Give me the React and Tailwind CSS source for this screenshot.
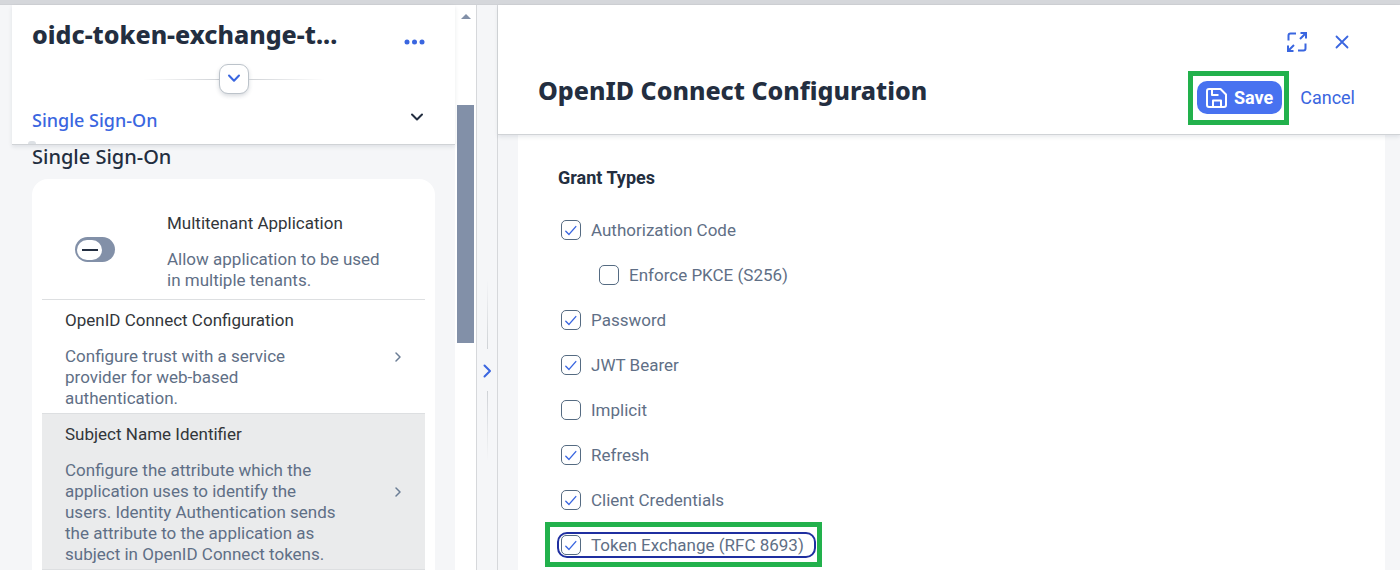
import React from "react";

const GRANTS = [
  { id: "auth-code", label: "Authorization Code", checked: true },
  { id: "pkce", label: "Enforce PKCE (S256)", checked: false, nested: true },
  { id: "password", label: "Password", checked: true },
  { id: "jwt", label: "JWT Bearer", checked: true },
  { id: "implicit", label: "Implicit", checked: false },
  { id: "refresh", label: "Refresh", checked: true },
  { id: "client", label: "Client Credentials", checked: true },
  { id: "exchange", label: "Token Exchange (RFC 8693)", checked: true, focused: true },
];

function CheckOption({ id, label, checked, nested, focused }) {
  return (
    <li className={nested ? "flex h-[45px] items-center pl-[38px]" : "flex h-[45px] items-center"}>
      <div
        className={
          focused
            ? "relative flex items-center rounded-lg outline-2 outline-[#1f2fa0]"
            : "relative flex items-center"
        }
      >
        <span className="ml-[2px] grid size-5 shrink-0 place-items-center">
          <input
            id={id}
            type="checkbox"
            defaultChecked={checked}
            className="peer col-start-1 row-start-1 size-5 appearance-none rounded-[5px] border border-[#556b82] bg-white"
          />
          <svg
            viewBox="0 0 20 20"
            className="pointer-events-none invisible col-start-1 row-start-1 size-5 peer-checked:visible"
            fill="none"
            stroke="#3a66e0"
            strokeWidth="1.4"
            strokeLinecap="round"
            strokeLinejoin="round"
          >
            <path d="M4.8 11.3 8 14.4 14.800 6.600" />
          </svg>
        </span>
        <label htmlFor={id} className="pr-[10px] pl-[10px] text-[17px] leading-[22px] whitespace-nowrap text-[#5f6f86]">
          {label}
        </label>
        {focused && (
          <span className="pointer-events-none absolute -top-3 -right-2 -bottom-[11px] -left-[14px] border-[5px] border-[#22b14c]" />
        )}
      </div>
    </li>
  );
}

function NavItem({ title, text, active }) {
  return (
    <li
      className={
        active
          ? "border-y border-[#dddfe1] bg-[#eaebec]"
          : "border-t border-[#dddfe1]"
      }
    >
      <a href="#item" className="flex items-center pt-[10px] pr-[22px] pb-1 pl-[23px]">
        <span className="flex-1">
          <span className="block text-[17px] leading-[21px] text-[#32363a]">{title}</span>
          <span className="mt-[15px] block max-w-[276px] text-[17px] leading-[21px] text-[#5f6f86]">{text}</span>
        </span>
        <svg
          viewBox="0 0 10 12"
          className="mb-[6px] h-3 w-[10px] shrink-0"
          fill="none"
          stroke="#6b7d95"
          strokeWidth="1.5"
          strokeLinecap="round"
          strokeLinejoin="round"
        >
          <path d="M3 2 7 6 3 10" />
        </svg>
      </a>
    </li>
  );
}

export default function App() {
  return (
    <div className="flex h-screen flex-col overflow-hidden bg-[#f5f6f8] font-[Roboto,'Liberation_Sans',sans-serif] text-[#232e40]">
      <div className="h-[5px] shrink-0 border-b border-[#cfd1d5] bg-[#d5d7db]" />
      <div className="flex min-h-0 flex-1">
        <section className="flex w-[34%] shrink-0 pl-3">
          <div className="flex min-w-0 flex-1 flex-col">
            <header className="relative z-10 h-[140px] shrink-0 border-b border-[#d0d3d6] bg-white px-5 shadow-[0_2px_4px_rgba(34,48,70,0.10)]">
              <div className="flex items-start justify-between pt-[13px]">
                <h1 className="font-['Noto_Sans',sans-serif] text-[25px] leading-8 font-extrabold whitespace-nowrap">
                  oidc-token-exchange-t...
                </h1>
                <button type="button" aria-label="More" className="mt-4 mr-2">
                  <svg viewBox="0 0 24 16" className="h-4 w-6" fill="#3a66e0">
                    <circle cx="4" cy="8" r="2.5" />
                    <circle cx="11.5" cy="8" r="2.5" />
                    <circle cx="19" cy="8" r="2.5" />
                  </svg>
                </button>
              </div>
              <div className="mt-[14px] flex items-center justify-center">
                <span className="h-px w-[76px] bg-linear-to-r from-transparent to-[#cfd2d6]" />
                <button
                  type="button"
                  aria-label="Expand header"
                  className="grid size-[30px] place-items-center rounded-[9px] border border-[#bcc3ca] bg-white shadow-[0_2px_4px_rgba(34,48,70,0.18)]"
                >
                  <svg
                    viewBox="0 0 16 16"
                    className="size-4"
                    fill="none"
                    stroke="#3a66e0"
                    strokeWidth="2"
                    strokeLinecap="round"
                    strokeLinejoin="round"
                  >
                    <path d="M3 4.5 8 9.8 13 4.5" />
                  </svg>
                </button>
                <span className="h-px w-[76px] bg-linear-to-l from-transparent to-[#cfd2d6]" />
              </div>
              <button type="button" className="mt-[14px] flex w-full items-center justify-between">
                <span className="font-['Noto_Sans',sans-serif] text-[18px] leading-6 font-medium text-[#3a66e0]">
                  Single Sign-On
                </span>
                <svg
                  viewBox="0 0 16 16"
                  className="mr-[10px] mb-[6px] size-4"
                  fill="none"
                  stroke="#232e40"
                  strokeWidth="2"
                  strokeLinecap="round"
                  strokeLinejoin="round"
                >
                  <path d="M3 5.5 8 10.5 13 5.5" />
                </svg>
              </button>
              <span className="absolute bottom-0 left-4 h-[3px] w-2 rounded-t-[3px] bg-[#dde1e5]" />
            </header>
            <div className="px-5">
              <h2 className="font-['Noto_Sans',sans-serif] text-[20px] leading-6 font-medium">Single Sign-On</h2>
              <ul className="mt-[10px] rounded-t-[16px] bg-white px-[10px] pt-[34px]">
                <li className="flex items-center pb-2 pl-[33px]">
                  <span className="mt-[-5px] grid h-[25px] w-10 shrink-0 items-center">
                    <input
                      id="multi"
                      type="checkbox"
                      role="switch"
                      className="col-start-1 row-start-1 h-[25px] w-10 appearance-none rounded-full bg-[#8290a8]"
                    />
                    <span className="pointer-events-none col-start-1 row-start-1 ml-[2px] grid h-5 w-[25px] place-items-center rounded-full bg-white">
                      <span className="h-[2px] w-4 bg-[#232e40]" />
                    </span>
                  </span>
                  <label htmlFor="multi" className="ml-[52px] block max-w-[230px] text-[17px] leading-[21px]">
                    <span className="block text-[#32363a]">Multitenant Application</span>
                    <span className="mt-[15px] block text-[#5f6f86]">
                      Allow application to be used in multiple tenants.
                    </span>
                  </label>
                </li>
                <NavItem
                  title="OpenID Connect Configuration"
                  text="Configure trust with a service provider for web-based authentication."
                />
                <NavItem
                  active
                  title="Subject Name Identifier"
                  text="Configure the attribute which the application uses to identify the users. Identity Authentication sends the attribute to the application as subject in OpenID Connect tokens."
                />
                <li className="h-10" />
              </ul>
            </div>
          </div>
          <div className="flex w-[21px] shrink-0 flex-col items-center bg-white pt-[9px]">
            <svg viewBox="0 0 10 5" className="h-[5px] w-[10px]" fill="#8290a8">
              <path d="M5 0 10 5H0Z" />
            </svg>
            <div className="mt-[86px] h-[238px] w-[17px] bg-[#8290a8]" />
          </div>
        </section>

        <div className="flex w-[22px] shrink-0 flex-col items-center border-x border-[#d6d8db] pt-[274px]">
          <span className="h-[70px] w-px bg-linear-to-b from-transparent to-[#cfd2d6]" />
          <button type="button" aria-label="Resize panels" className="grid h-[42px] w-5 place-items-center pt-[2px]">
            <svg
              viewBox="0 0 12 16"
              className="h-4 w-3"
              fill="none"
              stroke="#3a66e0"
              strokeWidth="2"
              strokeLinecap="round"
              strokeLinejoin="round"
            >
              <path d="M3.5 2.5 9 8 3.5 13.5" />
            </svg>
          </button>
          <span className="h-[70px] w-px bg-linear-to-t from-transparent to-[#cfd2d6]" />
        </div>

        <main className="flex min-w-0 flex-1 flex-col">
          <header className="relative z-10 h-[130px] shrink-0 border-b border-[#d0d3d6] bg-white pr-[45px] pl-10 shadow-[0_2px_4px_rgba(34,48,70,0.10)]">
            <div className="flex justify-end gap-[26px] pt-[26px]">
              <button type="button" aria-label="Full screen">
                <svg viewBox="0 0 22 22" className="size-[22px]" fill="none" stroke="#3a66e0" strokeWidth="2">
                  <path d="M10 2.5H4.5Q2.5 2.5 2.5 4.5V9.5" />
                  <path d="M12 19.5H17.5Q19.5 19.5 19.5 17.5V12.5" />
                  <path d="M14.5 2H20V7.5M20 2 14 8" />
                  <path d="M2 14.5V20H7.5M2 20 8 14" />
                </svg>
              </button>
              <button type="button" aria-label="Close" className="pr-[5px]">
                <svg
                  viewBox="0 0 16 16"
                  className="size-4"
                  fill="none"
                  stroke="#3a66e0"
                  strokeWidth="1.8"
                  strokeLinecap="round"
                >
                  <path d="M2.5 2.5 13.5 13.5M13.5 2.5 2.5 13.5" />
                </svg>
              </button>
            </div>
            <div className="mt-[18px] flex items-start justify-between">
              <h2 className="mt-[3px] font-['Noto_Sans',sans-serif] text-[25px] leading-8 font-extrabold whitespace-nowrap">
                OpenID Connect Configuration
              </h2>
              <div className="flex items-center">
                <div className="border-[5px] border-[#22b14c] pt-[5px] pr-[2px] pb-[6px] pl-1">
                  <button
                    type="button"
                    className="flex h-[33px] items-center gap-[7px] rounded-[10px] bg-[#4872f0] pr-[9px] pl-[9px] text-[18px] font-bold text-white"
                  >
                    <svg
                      viewBox="0 0 21 20"
                      className="h-5 w-[21px]"
                      fill="none"
                      stroke="currentColor"
                      strokeWidth="2"
                      strokeLinejoin="round"
                    >
                      <path d="M3 1H14.5L20 6.5V17Q20 19 18 19H3Q1 19 1 17V3Q1 1 3 1Z" />
                      <path d="M6 1.5V7H12.5" />
                      <path d="M7 19V12.5H15V19" />
                    </svg>
                    Save
                  </button>
                </div>
                <button type="button" className="ml-[11px] text-[18px] leading-[22px] text-[#3a66e0]">
                  Cancel
                </button>
              </div>
            </div>
          </header>
          <div className="mr-[15px] ml-5 flex-1 bg-white px-10 pt-8">
            <h3 className="text-[18px] leading-[22px] font-bold">Grant Types</h3>
            <ul className="mt-[18px] pl-px">
              {GRANTS.map((g) => (
                <CheckOption key={g.id} {...g} />
              ))}
            </ul>
          </div>
        </main>
      </div>
    </div>
  );
}
